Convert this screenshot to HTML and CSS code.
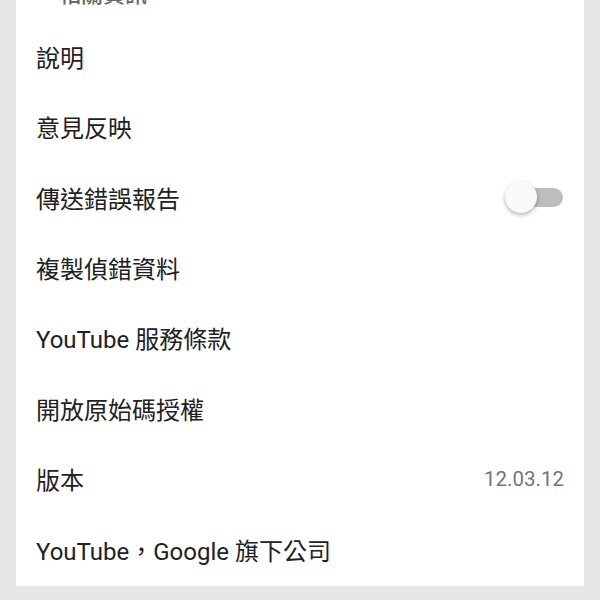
FILE: index.html
```html
<!DOCTYPE html>
<html lang="zh-Hant">
<head>
  <meta charset="UTF-8">
  <title>設定</title>
  <link rel="stylesheet" href="styles.css">
</head>
<body>
<main class="page">
  <section class="card">
    <h2 class="card-title">相關資訊</h2>
    <ul class="list">
      <li class="row">說明</li>
      <li class="row">意見反映</li>
      <li class="row">
        <span>傳送錯誤報告</span>
        <span class="switch"><span class="switch-thumb"></span></span>
      </li>
      <li class="row">複製偵錯資料</li>
      <li class="row">YouTube 服務條款</li>
      <li class="row">開放原始碼授權</li>
      <li class="row">
        <span>版本</span>
        <span class="value">12.03.12</span>
      </li>
      <li class="row">YouTube，Google 旗下公司</li>
    </ul>
  </section>
</main>
</body>
</html>
```

FILE: styles.css
```css
* {
  margin: 0;
  padding: 0;
  box-sizing: border-box;
}

body {
  background: #e6e6e6;
  font-family: Roboto, "Noto Sans CJK TC", sans-serif;
  color: #212121;
  overflow: hidden;
}

.page {
  padding: 0 16px;
}

.card {
  background: #fff;
  margin-top: -38px;
  padding-bottom: 2px;
}

.card-title {
  height: 59px;
  display: flex;
  align-items: center;
  padding-left: 43px;
  font-size: 22px;
  font-weight: 500;
  color: #666;
}

.list {
  list-style: none;
}

.row {
  height: 70.43px;
  display: flex;
  align-items: center;
  justify-content: space-between;
  padding: 0 20px;
  font-size: 24px;
}

.value {
  color: #757575;
  font-size: 20.5px;
}

.switch {
  position: relative;
  width: 58px;
  height: 19px;
  border-radius: 10px;
  background: #bdbdbd;
  margin-right: 1px;
}

.switch-thumb {
  position: absolute;
  left: 0;
  top: -6.5px;
  width: 32px;
  height: 32px;
  border-radius: 50%;
  background: #fafafa;
  box-shadow: 0 2px 4px rgba(0, 0, 0, 0.3);
}
```
